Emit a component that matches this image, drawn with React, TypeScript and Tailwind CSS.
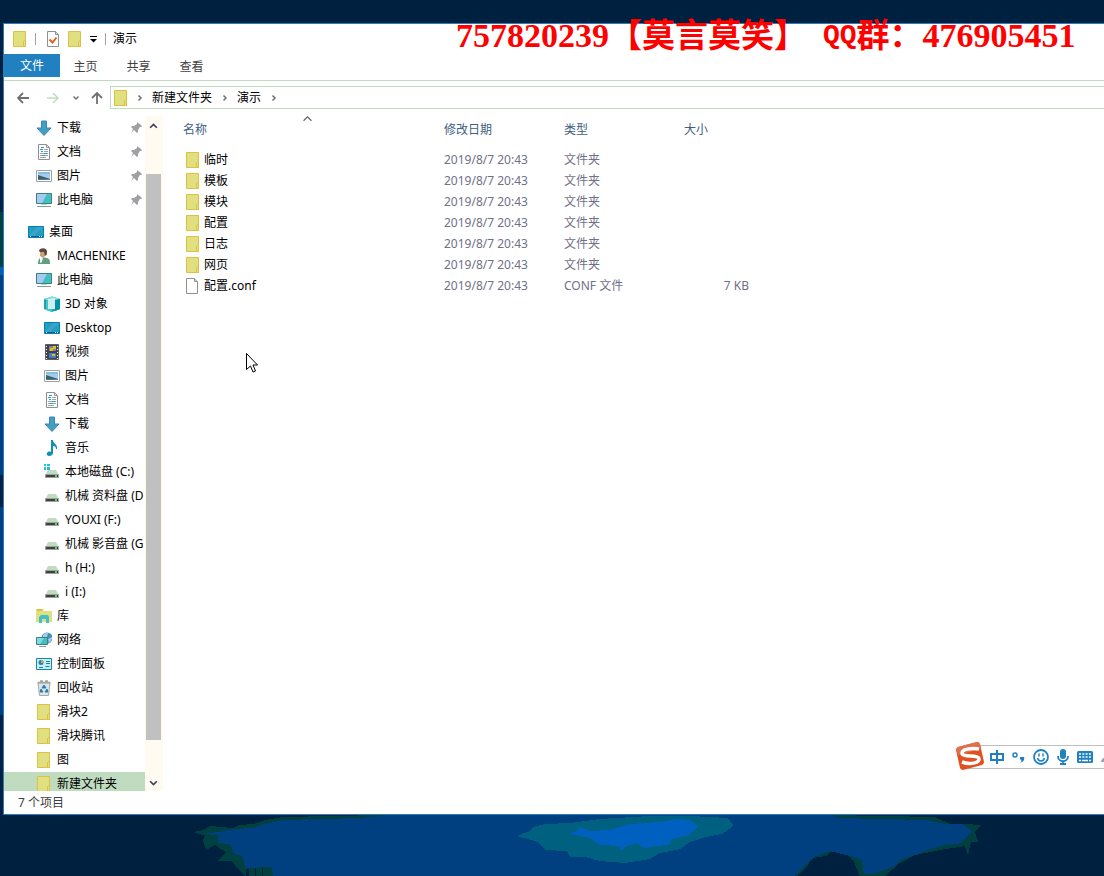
import type { ReactNode } from "react";

type IconName =
  | "download"
  | "document"
  | "picture"
  | "computer"
  | "desktop"
  | "user"
  | "cube"
  | "video"
  | "music"
  | "systemDrive"
  | "drive"
  | "library"
  | "network"
  | "control"
  | "trash"
  | "folder"
  | "file";

type NavItem = {
  label: string;
  icon: IconName;
  level: 0 | 1 | 2;
  selected?: boolean;
};

const pinnedItems: NavItem[] = [
  { label: "下载", icon: "download", level: 1 },
  { label: "文档", icon: "document", level: 1 },
  { label: "图片", icon: "picture", level: 1 },
  { label: "此电脑", icon: "computer", level: 1 },
];

const treeItems: NavItem[] = [
  { label: "桌面", icon: "desktop", level: 0 },
  { label: "MACHENIKE", icon: "user", level: 1 },
  { label: "此电脑", icon: "computer", level: 1 },
  { label: "3D 对象", icon: "cube", level: 2 },
  { label: "Desktop", icon: "desktop", level: 2 },
  { label: "视频", icon: "video", level: 2 },
  { label: "图片", icon: "picture", level: 2 },
  { label: "文档", icon: "document", level: 2 },
  { label: "下载", icon: "download", level: 2 },
  { label: "音乐", icon: "music", level: 2 },
  { label: "本地磁盘 (C:)", icon: "systemDrive", level: 2 },
  { label: "机械 资料盘 (D", icon: "drive", level: 2 },
  { label: "YOUXI (F:)", icon: "drive", level: 2 },
  { label: "机械 影音盘 (G", icon: "drive", level: 2 },
  { label: "h (H:)", icon: "drive", level: 2 },
  { label: "i (I:)", icon: "drive", level: 2 },
  { label: "库", icon: "library", level: 1 },
  { label: "网络", icon: "network", level: 1 },
  { label: "控制面板", icon: "control", level: 1 },
  { label: "回收站", icon: "trash", level: 1 },
  { label: "滑块2", icon: "folder", level: 1 },
  { label: "滑块腾讯", icon: "folder", level: 1 },
  { label: "图", icon: "folder", level: 1 },
  { label: "新建文件夹", icon: "folder", level: 1, selected: true },
];

const files: { name: string; type: string; size: string; icon: IconName }[] = [
  { name: "临时", type: "文件夹", size: "", icon: "folder" },
  { name: "模板", type: "文件夹", size: "", icon: "folder" },
  { name: "模块", type: "文件夹", size: "", icon: "folder" },
  { name: "配置", type: "文件夹", size: "", icon: "folder" },
  { name: "日志", type: "文件夹", size: "", icon: "folder" },
  { name: "网页", type: "文件夹", size: "", icon: "folder" },
  { name: "配置.conf", type: "CONF 文件", size: "7 KB", icon: "file" },
];

const levelPadding = {
  0: "pl-6",
  1: "pl-8",
  2: "pl-10",
};

const driveShape = (
  <>
    <path d="M4 6h8l2 4H2z" fill="#c0dcc0" />
    <path d="M1.500 10.500h13v3h-13z" fill="#404040" stroke="#a0a0a4" />
    <path d="M11 11h2v2h-2z" fill="#40e040" />
  </>
);

const drawings: Record<IconName, ReactNode> = {
  download: (
    <path d="M5.500 1h5v7h4.500L8 15.500 1 8h4.500z" fill="#40a0c0" stroke="#4080c0" />
  ),
  document: (
    <>
      <path d="M2.500.5h8l3 3v12h-11z" fill="#fff" stroke="#909090" />
      <path d="M10.500.5v3h3" fill="none" stroke="#909090" />
      <path d="M8 5.500h4M8 7.500h4M4 9.500h8M4 11.500h8M4 13.500h6" stroke="#a0a0a4" />
      <path d="M5 3.500h3M4 5.500h3M5 7.500h2M8 9.500h3M6 11.500h3" stroke="#20a0c0" />
    </>
  ),
  picture: (
    <>
      <path d="M.5 2.500h15v11H.5z" fill="#fff" stroke="#a0a0a4" />
      <path d="M2 4h12v8H2z" fill="#a6caf0" />
      <path d="M2 4h12v2H2z" fill="#80c0e0" />
      <path d="M2 12V7l3 1 3 1 6 2v1z" fill="#406060" />
      <path d="M2 11h12v1H2z" fill="#4080a0" />
    </>
  ),
  computer: (
    <>
      <path d="M.5 1.500h15v10H.5z" fill="#40c0c0" stroke="#408080" />
      <path d="M1 2h10L6 11H1z" fill="#a6caf0" />
      <path d="M5 12h6v1H5z" fill="#c0dcc0" />
      <path d="M1 14.500h14" stroke="#80a0a0" />
    </>
  ),
  desktop: (
    <>
      <path d="M.5 2.500h15v11H.5z" fill="#20a0c0" stroke="#0080c0" />
      <path d="M9 3h6L6 12H1z" fill="#40a0c8" />
      <path d="M1 12.500h14" stroke="#006080" />
      <path d="M2 12.500h1M11 12.500h1M13 12.500h1" stroke="#fff" />
    </>
  ),
  user: (
    <>
      <path d="M2 16c0-4 1-6 4-7l5 1c3 1 3 3 3 6z" fill="#60a080" />
      <path d="M4 9h3l-1 5-2 1z" fill="#fff" />
      <path d="M4 3h5v5l-2 2-3-2z" fill="#d0a070" />
      <path d="M3 3c0-3 7-4 8 0 0 3 0 4-2 5L8 4H4z" fill="#604840" />
    </>
  ),
  cube: (
    <>
      <path d="M0 3 8 .5 16 3v10l-8 3-8-3z" fill="#20a0b8" />
      <path d="M0 3 8 .5 16 3 8 6z" fill="#80e0e0" />
      <path d="m2 4 6 2v10l-6-2z" fill="#40c8c8" />
      <path d="m4 3 7-1v11H4z" fill="#d0f0f0" />
      <path d="m11 4 5-1v10l-5 2z" fill="#0090a8" />
    </>
  ),
  video: (
    <>
      <path d="M1.500.5h13v15h-13z" fill="#404050" stroke="#606060" />
      <path d="M5 2h7v5H5z" fill="#8080a0" />
      <path d="M5 9h7v5H5z" fill="#4080c0" />
      <path d="M6 4h3v3H6zM9 2h3v3H9z" fill="#e0c020" />
      <path d="M8 10h3v2H8z" fill="#e0c020" />
      <path d="M2.500 2v13M13.500 2v13" stroke="#fff" strokeDasharray="1 2" />
    </>
  ),
  music: (
    <path
      d="M7 0h2c0 4 5 4 4 9h-1c0-2-1-3-3-3v7c0 2-2 3-4 3-3 0-3-4 0-4.500 1 0 1.500 0 2 .3z"
      fill="#1090b0"
    />
  ),
  systemDrive: (
    <>
      {driveShape}
      <path d="M0 0h2v2H0zM3 0h3v2H3zM0 3h2v3H0zM3 3h3v3H3z" fill="#20c0e0" />
    </>
  ),
  drive: driveShape,
  library: (
    <>
      <path d="M0 1h7l1 2h8v11H0z" fill="#e0e080" />
      <path d="M1 2.500h5M1 1.500h6" stroke="#e0c040" />
      <path d="M3 15V9l2-2h7l1 2v6h-3v-4H6v4z" fill="#40c0c8" />
    </>
  ),
  network: (
    <>
      <circle cx="11" cy="6" r="5.500" fill="#4090b0" />
      <path d="M7 3c2-2 3-2 5-2l-1 4-4 1zM12 7l4-2c0 3-1 4-3 6z" fill="#a6caf0" />
      <path d="M.5 5.500h11v7H.5z" fill="#40c0c0" stroke="#408080" />
      <path d="M1 6h7l-4 6H1z" fill="#80d8e0" />
      <path d="M3 14.500h7" stroke="#80a0a0" />
    </>
  ),
  control: (
    <>
      <path d="M.5 2.500h15v11H.5z" fill="#c0f0f8" stroke="#2080a0" />
      <circle cx="5" cy="6.500" r="2.500" fill="#2080c0" />
      <path d="M5 4v3h3c0-2-1-3-3-3z" fill="#e0a040" />
      <path d="M10 5.500h4M10 7.500h4M3 11.500h4M9.500 10.500h4" stroke="#2080a0" />
    </>
  ),
  trash: (
    <>
      <path d="M2 3h12l-1.500 12.500h-9z" fill="#e0e4e4" stroke="#a0a8a8" />
      <path d="M1.500 2.500h13M4 1h3M9 1h3" stroke="#a0a8a8" strokeWidth="1.500" />
      <path d="m8 5 2 3H6zM5 9l2 3H4zM11 9l1 3H9z" fill="#2080c0" stroke="#2080c0" />
    </>
  ),
  folder: (
    <>
      <path d="M1.500.5h12v15h-12z" fill="#e0e080" stroke="#e0c040" />
      <path d="M11.500 15.500v-5l1-1h1v6z" fill="#e0e080" stroke="#e0c040" />
    </>
  ),
  file: (
    <>
      <path d="M1.500.5h8l3 3v12h-11z" fill="#fff" stroke="#909090" />
      <path d="M9.500.5v3h3" fill="#c0dcc0" stroke="#909090" />
    </>
  ),
};

function Icon({ name }: { name: IconName }) {
  return (
    <svg className="size-4 shrink-0" viewBox="0 0 16 16" aria-hidden="true">
      {drawings[name]}
    </svg>
  );
}

function Chevron({ className, d }: { className: string; d: string }) {
  return (
    <svg className={className} viewBox="0 0 8 8" fill="none" stroke="currentColor" aria-hidden="true">
      <path d={d} />
    </svg>
  );
}

function Pin() {
  return (
    <svg className="mr-[3px] mb-px ml-auto size-[11px] shrink-0" viewBox="0 0 11 11" aria-hidden="true">
      <path d="M6 0l5 4-1 1H9L7 8v2L6 11 3 8 0 11l2-4L0 5l1-1h2l3-2z" fill="#a0a0a4" />
    </svg>
  );
}

function NavRow({ item, pinned }: { item: NavItem; pinned?: boolean }) {
  return (
    <li className={item.selected ? "bg-[#c0dcc0]" : ""}>
      <a
        href="#"
        className={`flex h-6 items-center gap-[5px] whitespace-nowrap ${levelPadding[item.level]}`}
      >
        <Icon name={item.icon} />
        <span>{item.label}</span>
        {pinned && <Pin />}
      </a>
    </li>
  );
}

function TitleBar() {
  return (
    <header className="flex h-[30px] items-center pl-2">
      <Icon name="folder" />
      <span className="ml-[7px] h-3 w-px bg-[#a0a0a4]" />
      <button className="ml-[9px]" aria-label="属性">
        <svg className="size-4" viewBox="0 0 16 16">
          <path d="M2.500.5h8l3 3v12h-11z" fill="#fff" stroke="#909090" />
          <path d="M10.500.5v3h3" fill="#c0dcc0" stroke="#909090" />
          <path d="m4.500 8.500 3 3 4-5" fill="none" stroke="#e06020" strokeWidth="2" />
        </svg>
      </button>
      <button className="ml-[6px]" aria-label="新建文件夹">
        <Icon name="folder" />
      </button>
      <button className="ml-[7px]" aria-label="自定义快速访问工具栏">
        <svg className="h-2 w-[7px]" viewBox="0 0 7 8">
          <path d="M0 1.500h7" stroke="#000" />
          <path d="M0 4h7L3.500 7.500z" />
        </svg>
      </button>
      <span className="ml-[8px] h-3 w-px bg-[#a0a0a4]" />
      <h1 className="ml-[7px]">演示</h1>
    </header>
  );
}

function RibbonTabs() {
  return (
    <nav className="flex h-[27px] items-start border-b border-[#c0dcc0] text-[#404040]">
      <button className="h-[23px] w-14 bg-[#2080c0] text-white">文件</button>
      <button className="h-[25px] w-[53px] pr-[2px]">主页</button>
      <button className="h-[25px] w-[53px] pr-[2px]">共享</button>
      <button className="h-[25px] w-[53px] pr-[2px]">查看</button>
    </nav>
  );
}

function AddressBar() {
  return (
    <div className="flex h-[35px] shrink-0 items-start pt-[5px]">
      <div className="flex h-[23px] w-[106px] shrink-0 items-center pl-[13px] text-[#707070]">
        <button aria-label="后退">
          <svg className="h-3 w-3" viewBox="0 0 12 12" fill="none" stroke="currentColor" strokeWidth="1.800">
            <path d="M12 6H1M6 1 1 6l5 5" />
          </svg>
        </button>
        <button className="ml-[18px] text-[#c0dcc0]" aria-label="前进">
          <svg className="h-3 w-3" viewBox="0 0 12 12" fill="none" stroke="currentColor" strokeWidth="1.500">
            <path d="M0 6h11M6 1l5 5-5 5" />
          </svg>
        </button>
        <button className="ml-[13px]" aria-label="最近浏览的位置">
          <Chevron className="size-2 stroke-[1.500]" d="M1.500 2.500 4 5 6.500 2.500" />
        </button>
        <button className="ml-[11px]" aria-label="上移">
          <svg className="h-3 w-3" viewBox="0 0 12 12" fill="none" stroke="currentColor" strokeWidth="1.800">
            <path d="M6 12V1M1 6l5-5 5 5" />
          </svg>
        </button>
      </div>
      <div className="flex h-[23px] flex-1 items-center border-y border-l border-[#c0dcc0] pl-[2px]">
        <Icon name="folder" />
        <Chevron className="ml-[7px] size-2 stroke-[1.500] text-[#707070]" d="M2.500 1.500 5 4 2.500 6.500" />
        <button className="ml-[8px]">新建文件夹</button>
        <Chevron className="ml-[9px] size-2 stroke-[1.500] text-[#707070]" d="M2.500 1.500 5 4 2.500 6.500" />
        <button className="ml-[8px]">演示</button>
        <Chevron className="ml-[9px] size-2 stroke-[1.500] text-[#707070]" d="M2.500 1.500 5 4 2.500 6.500" />
      </div>
    </div>
  );
}

function Sidebar() {
  return (
    <aside className="flex shrink-0">
      <nav className="w-[141px] overflow-hidden">
        <ul>
          {pinnedItems.map((item) => (
            <NavRow key={item.label} item={item} pinned />
          ))}
        </ul>
        <ul className="pt-2">
          {treeItems.map((item, index) => (
            <NavRow key={index} item={item} />
          ))}
        </ul>
      </nav>
      <div className="flex w-[18px] flex-col items-start bg-[#fffbf0] pl-px text-[#404060]">
        <button className="flex h-[58px] w-[15px] items-start justify-center pt-[5px]" aria-label="向上滚动">
          <Chevron className="size-[9px] stroke-[1.500]" d="M1 6l3-3 3 3" />
        </button>
        <div className="w-[15px] flex-1 bg-[#c0c0c0]" />
        <button className="flex h-[51px] w-[15px] items-end justify-center pb-[3px]" aria-label="向下滚动">
          <Chevron className="size-[9px] stroke-[1.500]" d="M1 2l3 3 3-3" />
        </button>
      </div>
    </aside>
  );
}

function FileTable() {
  return (
    <main className="min-w-0 flex-1 overflow-hidden pl-[11px]">
      <table className="w-[583px] table-fixed text-left text-[#707088]">
        <colgroup>
          <col className="w-[261px]" />
          <col className="w-[120px]" />
          <col className="w-[120px]" />
          <col className="w-[82px]" />
        </colgroup>
        <thead>
          <tr className="h-[33px] align-top leading-[28px] text-[#406080]">
            <th className="relative pl-[9px] font-normal">
              名称
              <Chevron className="absolute left-[129px] top-[-2px] size-[9px] text-[#606060]" d="M.5 6 4 2.500 7.500 6" />
            </th>
            <th className="pl-[9px] font-normal">修改日期</th>
            <th className="pl-[9px] font-normal">类型</th>
            <th className="pl-[9px] font-normal">大小</th>
          </tr>
        </thead>
        <tbody>
          {files.map((file) => (
            <tr key={file.name} className="h-[21px]">
              <td className="pl-[11px] text-black">
                <span className="flex items-center gap-[3px]">
                  <Icon name={file.icon} />
                  {file.name}
                </span>
              </td>
              <td className="pl-[9px]">2019/8/7 20:43</td>
              <td className="pl-[9px]">{file.type}</td>
              <td className="pr-[8px] text-right">{file.size}</td>
            </tr>
          ))}
        </tbody>
      </table>
    </main>
  );
}

function Watermark() {
  return (
    <p className="absolute left-[456px] top-[16px] flex items-center whitespace-pre font-['Liberation_Serif','Noto_Sans_CJK_SC',serif] text-[33px] leading-[40px] font-bold text-[#ff0000]">
      <span className="text-[34px]">757820239</span>
      <span>【莫言莫笑】</span>
      <span className="ml-[16px] font-['Liberation_Mono','Noto_Sans_CJK_SC',monospace] text-[28px]">QQ</span>
      <span>群：</span>
      <span className="text-[34px]">476905451</span>
    </p>
  );
}

function InputMethodBar() {
  return (
    <div className="absolute right-0 bottom-[106px] flex h-[26px] w-[148px] items-center">
      <div className="ml-3 flex h-6 flex-1 items-center gap-[6px] overflow-hidden border-y border-[#c0c0c0] bg-white pl-[21px] text-[#2080c0]">
        <button aria-label="中文">
          <svg className="size-4" viewBox="0 0 16 16" fill="none" stroke="currentColor" strokeWidth="2">
            <path d="M2 5h12v6H2zM8 1v14" />
          </svg>
        </button>
        <button aria-label="中文标点">
          <svg className="size-4" viewBox="0 0 16 16">
            <circle cx="4" cy="6" r="2" fill="none" stroke="currentColor" strokeWidth="1.500" />
            <path d="M9 8h4c1 3-1 5-4 6 1-1 2-2 1-3L9 10z" fill="currentColor" />
          </svg>
        </button>
        <button aria-label="表情">
          <svg className="size-4" viewBox="0 0 16 16" fill="none" stroke="currentColor" strokeWidth="2">
            <circle cx="8" cy="8" r="7" strokeWidth="1.800" />
            <path d="M6 4.500v3M10 4.500v3" strokeWidth="1.500" />
            <path d="M4.500 9c1 4 6 4 7 0" strokeWidth="1.500" />
          </svg>
        </button>
        <button aria-label="语音">
          <svg className="size-4" viewBox="0 0 16 16">
            <rect x="5" y="0" width="6" height="10" rx="3" fill="currentColor" />
            <path d="M3 7c0 7 10 7 10 0M8 12v3M5 15h6" fill="none" stroke="currentColor" strokeWidth="1.800" />
          </svg>
        </button>
        <button aria-label="软键盘">
          <svg className="size-4" viewBox="0 0 16 16">
            <rect x="0" y="2" width="16" height="12" rx="1.500" fill="currentColor" />
            <path d="M2 5h12M2 8h12" stroke="#fff" strokeWidth="1.500" strokeDasharray="2 1.300" />
            <path d="M2 11.500h2M5 11.500h6M12 11.500h2" stroke="#fff" strokeWidth="1.500" />
          </svg>
        </button>
        <svg className="size-4 shrink-0" viewBox="0 0 16 16" aria-hidden="true">
          <path d="M2 13c0-3 3-5 6-5v5z" fill="#a0a0a4" />
        </svg>
      </div>
      <svg className="absolute left-0 top-[-2px] size-7" viewBox="0 0 28 28" aria-hidden="true">
        <path d="M2 5 21 0q2 0 3 2l4 18q0 2-2 3L7 28q-2 0-3-2L0 8q0-2 2-3z" fill="#e05020" />
        <path d="M0 8q0-2 2-3l19-5q2 0 3 2l1 5L2 13z" fill="#e07050" />
        <path
          d="M23 7C15 6 6 7 6 11c0 5 17 1 17 6 0 4-9 6-17 3"
          fill="none"
          stroke="#fff"
          strokeWidth="3.500"
        />
      </svg>
    </div>
  );
}

function Wallpaper() {
  return (
    <svg
      className="h-[61px] w-full shrink-0"
      viewBox="0 0 1104 61"
      preserveAspectRatio="none"
      shapeRendering="crispEdges"
      aria-hidden="true"
    >
      <path
        d="M383 0 283 2 265 5 254 9 240 10 233 13 210 11 203 15 193 17 205 21 203 25 206 35 215 30 226 37 218 46 232 46 238 54 245 61H797L808 50 812 43 826 41 830 37 845 38 853 45 860 61H885L900 48 915 40 940 35 965 31 968 40 971 27 978 27 975 17 981 10 965 9 950 9 935 2 830 0z"
        fill="#004040"
      />
      <path
        d="M390 0 360 3 283 5 265 9 253 13 235 14 218 17 203 19 218 20 218 28 230 29 234 38 243 42 245 53 272 52 273 61H794L806 49 816 41 830 36 850 41 862 45 864 59H873L895 51 900 45 920 38 940 31 961 28 972 16 962 9 945 9 925 5 880 4 840 3 830 0z"
        fill="#004080"
      />
      <path d="M801 61 812 52 822 48 825 41 836 41 853 45 853 61z" fill="#002040" />
      <path d="M251 53h21v8h-21z" fill="#004040" />
      <path d="M246 54h3v7h-3zM255 53h1v8h-1zM262 53h1v8h-1z" fill="#002040" />
      <path
        d="M517 21 530 16 533 12 545 9 570 8 600 4 650 1 690 1 728 3 733 10 732 12 722 19 706 22 690 27 680 34 660 38 650 44 625 48 600 46 585 42 570 42 567 36 545 35 538 27z"
        fill="#006080"
      />
      <path
        d="M568 18 575 17 580 12 590 16 610 15 630 9 660 7 675 4 690 5 698 11 690 20 672 24 668 30 655 31 645 33 636 28 625 32 622 36 619 31 600 30 590 23 575 20z"
        fill="#0060c0"
      />
    </svg>
  );
}

export default function App() {
  return (
    <div className="relative flex h-screen flex-col overflow-hidden bg-[#002040] pt-[23px] font-['Noto_Sans','Noto_Sans_CJK_SC',sans-serif] text-[12px] leading-[16px] text-black">
      <div className="flex min-h-0 flex-1">
        <div className="flex w-[3px] shrink-0 flex-col" aria-hidden="true">
          <div className="mt-[189px] h-[55px] bg-[#004040]" />
          <div className="h-[8px] bg-[#0060c0]" />
          <div className="h-[200px] bg-[#004080]" />
          <div className="mt-[32px] h-[208px] bg-[#004080]" />
        </div>
        <section className="flex min-w-0 flex-1 flex-col border-y border-l border-[#2080c0] bg-white">
          <TitleBar />
          <RibbonTabs />
          <AddressBar />
          <div className="flex min-h-0 flex-1">
            <Sidebar />
            <FileTable />
          </div>
          <footer className="flex h-[23px] shrink-0 items-center pl-[14px] text-[#404040]">
            7 个项目
          </footer>
        </section>
      </div>
      <Wallpaper />
      <Watermark />
      <InputMethodBar />
      <svg className="absolute left-[246px] top-[353px] h-5 w-3" viewBox="0 0 12 20" aria-hidden="true">
        <path d="M.5.5v16l4-3.500 2.500 6 2.500-1-2.500-6h4.500z" fill="#fff" stroke="#000" />
      </svg>
    </div>
  );
}
